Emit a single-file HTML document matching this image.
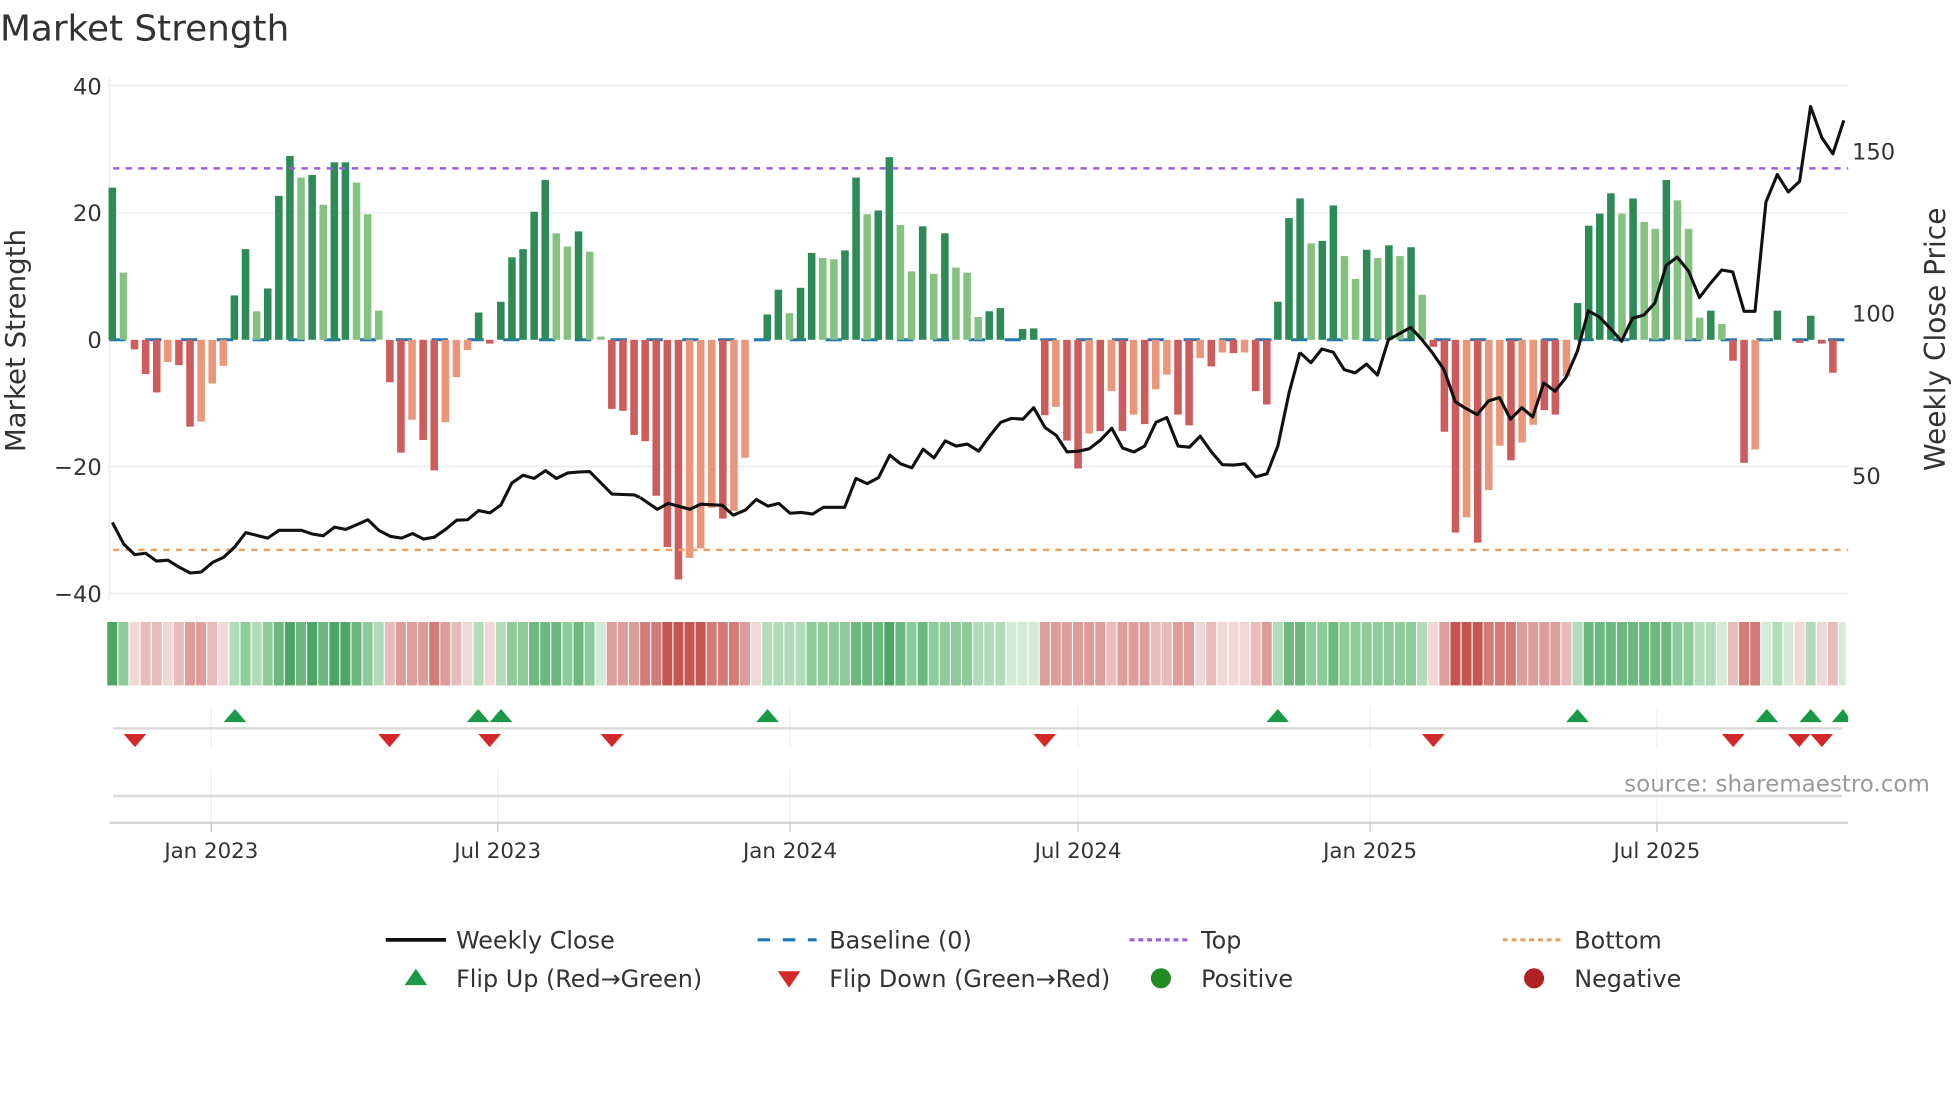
<!DOCTYPE html>
<html><head><meta charset="utf-8"><style>
html,body{margin:0;padding:0;background:#fff;}
svg{display:block;font-family:"DejaVu Sans","Liberation Sans",sans-serif;}
.D{fill:#2e8b57}.L{fill:#85c180}.R{fill:#cd5c5c}.S{fill:#e9967a}
.g5{fill:#4ea566}.g4{fill:#6cb87e}.g3{fill:#8ecb9a}.g2{fill:#b2dcb9}.g1{fill:#d3ebd7}
.r5{fill:#c55550}.r4{fill:#d27b77}.r3{fill:#dd9d9b}.r2{fill:#e8bcbb}.r1{fill:#f1d8d8}
.t{fill:#333}
</style></head><body>
<svg width="1960" height="1102" viewBox="0 0 1560 877" xmlns="http://www.w3.org/2000/svg">
<text x="0" y="32" font-size="28.5" class="t">Market Strength</text>
<g stroke="#ebedf2" stroke-width="1.2">
<line x1="87" y1="68" x2="1471" y2="68"/><line x1="87" y1="169.4" x2="1471" y2="169.4"/>
<line x1="87" y1="371.2" x2="1471" y2="371.2"/><line x1="87" y1="472.1" x2="1471" y2="472.1"/>
<line x1="87" y1="62" x2="87" y2="478"/>
</g>
<g font-size="18" class="t" text-anchor="end">
<text x="81" y="75">40</text><text x="81" y="176">20</text><text x="81" y="277">0</text>
<text x="81" y="378">−20</text><text x="81" y="479">−40</text>
</g>
<g font-size="18" class="t">
<text x="1474" y="127">150</text><text x="1474" y="256">100</text><text x="1474" y="385">50</text>
</g>
<text transform="translate(20,271) rotate(-90)" font-size="22" class="t" text-anchor="middle">Market Strength</text>
<text transform="translate(1548,270) rotate(-90)" font-size="22.3" class="t" text-anchor="middle">Weekly Close Price</text>
<line x1="87" y1="270.4" x2="1471" y2="270.4" stroke="#1f77b4" stroke-width="2.4" stroke-dasharray="13 15.5"/>
<g transform="translate(86.4,270.4) scale(8.835,-5.046)">
<rect x="0" y="0" width=".68" height="24" class="D"/>
<rect x="1" y="0" width=".68" height="10.6" class="L"/>
<rect x="2" y="-1.5" width=".68" height="1.5" class="R"/>
<rect x="3" y="-5.4" width=".68" height="5.4" class="R"/>
<rect x="4" y="-8.3" width=".68" height="8.3" class="R"/>
<rect x="5" y="-3.5" width=".68" height="3.5" class="S"/>
<rect x="6" y="-4" width=".68" height="4" class="R"/>
<rect x="7" y="-13.7" width=".68" height="13.7" class="R"/>
<rect x="8" y="-12.9" width=".68" height="12.9" class="S"/>
<rect x="9" y="-6.9" width=".68" height="6.9" class="S"/>
<rect x="10" y="-4.1" width=".68" height="4.1" class="S"/>
<rect x="11" y="0" width=".68" height="7" class="D"/>
<rect x="12" y="0" width=".68" height="14.3" class="D"/>
<rect x="13" y="0" width=".68" height="4.5" class="L"/>
<rect x="14" y="0" width=".68" height="8.1" class="D"/>
<rect x="15" y="0" width=".68" height="22.7" class="D"/>
<rect x="16" y="0" width=".68" height="29" class="D"/>
<rect x="17" y="0" width=".68" height="25.6" class="L"/>
<rect x="18" y="0" width=".68" height="26" class="D"/>
<rect x="19" y="0" width=".68" height="21.3" class="L"/>
<rect x="20" y="0" width=".68" height="28" class="D"/>
<rect x="21" y="0" width=".68" height="28" class="D"/>
<rect x="22" y="0" width=".68" height="24.8" class="L"/>
<rect x="23" y="0" width=".68" height="19.8" class="L"/>
<rect x="24" y="0" width=".68" height="4.6" class="L"/>
<rect x="25" y="-6.7" width=".68" height="6.7" class="R"/>
<rect x="26" y="-17.8" width=".68" height="17.8" class="R"/>
<rect x="27" y="-12.6" width=".68" height="12.6" class="S"/>
<rect x="28" y="-15.8" width=".68" height="15.8" class="R"/>
<rect x="29" y="-20.6" width=".68" height="20.6" class="R"/>
<rect x="30" y="-13" width=".68" height="13" class="S"/>
<rect x="31" y="-5.9" width=".68" height="5.9" class="S"/>
<rect x="32" y="-1.6" width=".68" height="1.6" class="S"/>
<rect x="33" y="0" width=".68" height="4.3" class="D"/>
<rect x="34" y="-0.6" width=".68" height="0.6" class="R"/>
<rect x="35" y="0" width=".68" height="6" class="D"/>
<rect x="36" y="0" width=".68" height="13" class="D"/>
<rect x="37" y="0" width=".68" height="14.3" class="D"/>
<rect x="38" y="0" width=".68" height="20.2" class="D"/>
<rect x="39" y="0" width=".68" height="25.2" class="D"/>
<rect x="40" y="0" width=".68" height="16.8" class="L"/>
<rect x="41" y="0" width=".68" height="14.7" class="L"/>
<rect x="42" y="0" width=".68" height="17.1" class="D"/>
<rect x="43" y="0" width=".68" height="13.9" class="L"/>
<rect x="44" y="0" width=".68" height="0.5" class="L"/>
<rect x="45" y="-10.9" width=".68" height="10.9" class="R"/>
<rect x="46" y="-11.2" width=".68" height="11.2" class="R"/>
<rect x="47" y="-15" width=".68" height="15" class="R"/>
<rect x="48" y="-16" width=".68" height="16" class="R"/>
<rect x="49" y="-24.6" width=".68" height="24.6" class="R"/>
<rect x="50" y="-32.7" width=".68" height="32.7" class="R"/>
<rect x="51" y="-37.8" width=".68" height="37.8" class="R"/>
<rect x="52" y="-34.4" width=".68" height="34.4" class="S"/>
<rect x="53" y="-32.9" width=".68" height="32.9" class="S"/>
<rect x="54" y="-26.5" width=".68" height="26.5" class="S"/>
<rect x="55" y="-28.2" width=".68" height="28.2" class="R"/>
<rect x="56" y="-27" width=".68" height="27" class="S"/>
<rect x="57" y="-18.6" width=".68" height="18.6" class="S"/>
<rect x="59" y="0" width=".68" height="4" class="D"/>
<rect x="60" y="0" width=".68" height="7.9" class="D"/>
<rect x="61" y="0" width=".68" height="4.2" class="L"/>
<rect x="62" y="0" width=".68" height="8.2" class="D"/>
<rect x="63" y="0" width=".68" height="13.7" class="D"/>
<rect x="64" y="0" width=".68" height="12.9" class="L"/>
<rect x="65" y="0" width=".68" height="12.7" class="L"/>
<rect x="66" y="0" width=".68" height="14.1" class="D"/>
<rect x="67" y="0" width=".68" height="25.6" class="D"/>
<rect x="68" y="0" width=".68" height="19.8" class="L"/>
<rect x="69" y="0" width=".68" height="20.4" class="D"/>
<rect x="70" y="0" width=".68" height="28.8" class="D"/>
<rect x="71" y="0" width=".68" height="18.1" class="L"/>
<rect x="72" y="0" width=".68" height="10.8" class="L"/>
<rect x="73" y="0" width=".68" height="17.9" class="D"/>
<rect x="74" y="0" width=".68" height="10.4" class="L"/>
<rect x="75" y="0" width=".68" height="16.8" class="D"/>
<rect x="76" y="0" width=".68" height="11.4" class="L"/>
<rect x="77" y="0" width=".68" height="10.6" class="L"/>
<rect x="78" y="0" width=".68" height="3.6" class="L"/>
<rect x="79" y="0" width=".68" height="4.5" class="D"/>
<rect x="80" y="0" width=".68" height="5" class="D"/>
<rect x="82" y="0" width=".68" height="1.7" class="D"/>
<rect x="83" y="0" width=".68" height="1.8" class="D"/>
<rect x="84" y="-11.9" width=".68" height="11.9" class="R"/>
<rect x="85" y="-10.6" width=".68" height="10.6" class="S"/>
<rect x="86" y="-15.9" width=".68" height="15.9" class="R"/>
<rect x="87" y="-20.3" width=".68" height="20.3" class="R"/>
<rect x="88" y="-14.8" width=".68" height="14.8" class="S"/>
<rect x="89" y="-14.4" width=".68" height="14.4" class="R"/>
<rect x="90" y="-8.1" width=".68" height="8.1" class="S"/>
<rect x="91" y="-14.4" width=".68" height="14.4" class="R"/>
<rect x="92" y="-11.8" width=".68" height="11.8" class="S"/>
<rect x="93" y="-13.3" width=".68" height="13.3" class="R"/>
<rect x="94" y="-7.8" width=".68" height="7.8" class="S"/>
<rect x="95" y="-5.5" width=".68" height="5.5" class="S"/>
<rect x="96" y="-11.8" width=".68" height="11.8" class="R"/>
<rect x="97" y="-13.5" width=".68" height="13.5" class="R"/>
<rect x="98" y="-2.9" width=".68" height="2.9" class="S"/>
<rect x="99" y="-4.2" width=".68" height="4.2" class="R"/>
<rect x="100" y="-2" width=".68" height="2" class="S"/>
<rect x="101" y="-2.1" width=".68" height="2.1" class="R"/>
<rect x="102" y="-2" width=".68" height="2" class="S"/>
<rect x="103" y="-8.1" width=".68" height="8.1" class="R"/>
<rect x="104" y="-10.2" width=".68" height="10.2" class="R"/>
<rect x="105" y="0" width=".68" height="6" class="D"/>
<rect x="106" y="0" width=".68" height="19.2" class="D"/>
<rect x="107" y="0" width=".68" height="22.3" class="D"/>
<rect x="108" y="0" width=".68" height="15.2" class="L"/>
<rect x="109" y="0" width=".68" height="15.6" class="D"/>
<rect x="110" y="0" width=".68" height="21.2" class="D"/>
<rect x="111" y="0" width=".68" height="13.2" class="L"/>
<rect x="112" y="0" width=".68" height="9.6" class="L"/>
<rect x="113" y="0" width=".68" height="14.2" class="D"/>
<rect x="114" y="0" width=".68" height="12.9" class="L"/>
<rect x="115" y="0" width=".68" height="14.9" class="D"/>
<rect x="116" y="0" width=".68" height="13.2" class="L"/>
<rect x="117" y="0" width=".68" height="14.6" class="D"/>
<rect x="118" y="0" width=".68" height="7.1" class="L"/>
<rect x="119" y="-1.1" width=".68" height="1.1" class="R"/>
<rect x="120" y="-14.5" width=".68" height="14.5" class="R"/>
<rect x="121" y="-30.4" width=".68" height="30.4" class="R"/>
<rect x="122" y="-28" width=".68" height="28" class="S"/>
<rect x="123" y="-32" width=".68" height="32" class="R"/>
<rect x="124" y="-23.7" width=".68" height="23.7" class="S"/>
<rect x="125" y="-16.7" width=".68" height="16.7" class="S"/>
<rect x="126" y="-19" width=".68" height="19" class="R"/>
<rect x="127" y="-16.2" width=".68" height="16.2" class="S"/>
<rect x="128" y="-13.4" width=".68" height="13.4" class="S"/>
<rect x="129" y="-11.1" width=".68" height="11.1" class="R"/>
<rect x="130" y="-11.8" width=".68" height="11.8" class="R"/>
<rect x="131" y="-5.8" width=".68" height="5.8" class="S"/>
<rect x="132" y="0" width=".68" height="5.8" class="D"/>
<rect x="133" y="0" width=".68" height="18" class="D"/>
<rect x="134" y="0" width=".68" height="19.9" class="D"/>
<rect x="135" y="0" width=".68" height="23.1" class="D"/>
<rect x="136" y="0" width=".68" height="19.9" class="L"/>
<rect x="137" y="0" width=".68" height="22.3" class="D"/>
<rect x="138" y="0" width=".68" height="18.6" class="L"/>
<rect x="139" y="0" width=".68" height="17.5" class="L"/>
<rect x="140" y="0" width=".68" height="25.2" class="D"/>
<rect x="141" y="0" width=".68" height="22" class="L"/>
<rect x="142" y="0" width=".68" height="17.5" class="L"/>
<rect x="143" y="0" width=".68" height="3.5" class="L"/>
<rect x="144" y="0" width=".68" height="4.6" class="D"/>
<rect x="145" y="0" width=".68" height="2.5" class="L"/>
<rect x="146" y="-3.3" width=".68" height="3.3" class="R"/>
<rect x="147" y="-19.4" width=".68" height="19.4" class="R"/>
<rect x="148" y="-17.3" width=".68" height="17.3" class="S"/>
<rect x="149" y="0" width=".68" height="0.25" class="L"/>
<rect x="150" y="0" width=".68" height="4.6" class="D"/>
<rect x="152" y="-0.5" width=".68" height="0.5" class="R"/>
<rect x="153" y="0" width=".68" height="3.8" class="D"/>
<rect x="154" y="-0.6" width=".68" height="0.6" class="R"/>
<rect x="155" y="-5.2" width=".68" height="5.2" class="R"/>
</g>
<line x1="90" y1="134" x2="1471" y2="134" stroke="#9b5fd6" stroke-width="2" stroke-dasharray="5 5"/>
<line x1="90" y1="437.6" x2="1471" y2="437.6" stroke="#eba262" stroke-width="2" stroke-dasharray="5 5"/>
<g fill="none" stroke="#111" stroke-width="3.1" stroke-linejoin="round">
<polyline vector-effect="non-scaling-stroke" transform="scale(0.335,0.3654)" points="267,1138 294,1185 320,1208 346,1205 372,1222 399,1220 425,1235 452,1248 478,1246 505,1225 531,1214 557,1192 584,1160 610,1166 636,1172 663,1155 689,1155 716,1155 742,1163 768,1167 795,1148 821,1153 847,1143 874,1132 900,1155 927,1168 954,1172 980,1162 1006,1174 1032,1170 1060,1152 1085,1133 1111,1132 1137,1112 1164,1117 1190,1100 1216,1052 1243,1035 1269,1042 1296,1025 1322,1042 1349,1030 1375,1028 1401,1027 1428,1052 1454,1076 1481,1077 1507,1078 1520,1083"/>
<polyline vector-effect="non-scaling-stroke" transform="translate(509.4,79.6) scale(0.3451,0.3147)" points="0,1005 40,1035 65,1020 115,1035 140,1022 190,1025 215,1050 243,1037 268,1010 295,1027 320,1020 346,1045 372,1043 398,1047 423,1030 472,1030 498,957 524,970 550,955 576,898 601,920 627,930 653,883 678,905 704,862 729,875 755,870 781,888 806,850 832,815 857,805 883,807 908,778 934,828 960,848 985,890 1011,888 1036,882 1062,860 1088,830 1113,880 1139,890 1164,875 1190,815 1215,803 1241,875 1267,878 1292,850 1318,890 1343,922 1369,923 1395,920 1420,953 1446,945 1471,875 1497,740 1522,638"/>
<polyline vector-effect="non-scaling-stroke" transform="translate(1034.7,0) scale(0.335,0.3654)" points="0,768 26,790 52,760 79,767 105,805 131,812 158,793 184,817 210,740 263,713 290,740 316,770 342,805 369,875 395,890 421,903 448,873 474,866 500,913 527,888 553,908 579,834 606,852 632,822 659,765 685,677 711,690 738,716 764,743 790,693 817,686 843,660 870,578 896,560 923,590 949,648 975,617 1002,588 1028,592 1055,678 1081,678 1107,440 1134,380 1160,418 1187,395 1213,232 1240,300 1266,335 1292,262"/>
</g>
<g transform="translate(85.4,495) scale(8.835,50.5)">
<rect x="0" width=".9" height="1" class="g5"/><rect x="1" width=".9" height="1" class="g3"/><rect x="2" width=".9" height="1" class="r1"/><rect x="3" width=".9" height="1" class="r2"/><rect x="4" width=".9" height="1" class="r2"/><rect x="5" width=".9" height="1" class="r1"/><rect x="6" width=".9" height="1" class="r2"/><rect x="7" width=".9" height="1" class="r3"/><rect x="8" width=".9" height="1" class="r3"/><rect x="9" width=".9" height="1" class="r2"/><rect x="10" width=".9" height="1" class="r1"/>
<rect x="11" width=".9" height="1" class="g2"/><rect x="12" width=".9" height="1" class="g3"/><rect x="13" width=".9" height="1" class="g2"/><rect x="14" width=".9" height="1" class="g3"/><rect x="15" width=".9" height="1" class="g4"/><rect x="16" width=".9" height="1" class="g5"/><rect x="17" width=".9" height="1" class="g4"/><rect x="18" width=".9" height="1" class="g5"/><rect x="19" width=".9" height="1" class="g4"/><rect x="20" width=".9" height="1" class="g5"/><rect x="21" width=".9" height="1" class="g5"/><rect x="22" width=".9" height="1" class="g4"/><rect x="23" width=".9" height="1" class="g3"/><rect x="24" width=".9" height="1" class="g2"/>
<rect x="25" width=".9" height="1" class="r2"/><rect x="26" width=".9" height="1" class="r3"/><rect x="27" width=".9" height="1" class="r3"/><rect x="28" width=".9" height="1" class="r3"/><rect x="29" width=".9" height="1" class="r4"/><rect x="30" width=".9" height="1" class="r3"/><rect x="31" width=".9" height="1" class="r2"/><rect x="32" width=".9" height="1" class="r1"/>
<rect x="33" width=".9" height="1" class="g2"/><rect x="34" width=".9" height="1" class="r1"/><rect x="35" width=".9" height="1" class="g2"/><rect x="36" width=".9" height="1" class="g3"/><rect x="37" width=".9" height="1" class="g3"/><rect x="38" width=".9" height="1" class="g4"/><rect x="39" width=".9" height="1" class="g4"/><rect x="40" width=".9" height="1" class="g4"/><rect x="41" width=".9" height="1" class="g3"/><rect x="42" width=".9" height="1" class="g4"/><rect x="43" width=".9" height="1" class="g3"/><rect x="44" width=".9" height="1" class="g1"/>
<rect x="45" width=".9" height="1" class="r3"/><rect x="46" width=".9" height="1" class="r3"/><rect x="47" width=".9" height="1" class="r3"/><rect x="48" width=".9" height="1" class="r4"/><rect x="49" width=".9" height="1" class="r4"/><rect x="50" width=".9" height="1" class="r5"/><rect x="51" width=".9" height="1" class="r5"/><rect x="52" width=".9" height="1" class="r5"/><rect x="53" width=".9" height="1" class="r5"/><rect x="54" width=".9" height="1" class="r4"/><rect x="55" width=".9" height="1" class="r4"/><rect x="56" width=".9" height="1" class="r4"/><rect x="57" width=".9" height="1" class="r3"/><rect x="58" width=".9" height="1" class="r1"/>
<rect x="59" width=".9" height="1" class="g2"/><rect x="60" width=".9" height="1" class="g2"/><rect x="61" width=".9" height="1" class="g2"/><rect x="62" width=".9" height="1" class="g2"/><rect x="63" width=".9" height="1" class="g3"/><rect x="64" width=".9" height="1" class="g3"/><rect x="65" width=".9" height="1" class="g3"/><rect x="66" width=".9" height="1" class="g3"/><rect x="67" width=".9" height="1" class="g4"/><rect x="68" width=".9" height="1" class="g4"/><rect x="69" width=".9" height="1" class="g4"/><rect x="70" width=".9" height="1" class="g5"/><rect x="71" width=".9" height="1" class="g4"/><rect x="72" width=".9" height="1" class="g3"/><rect x="73" width=".9" height="1" class="g4"/><rect x="74" width=".9" height="1" class="g3"/><rect x="75" width=".9" height="1" class="g3"/><rect x="76" width=".9" height="1" class="g3"/><rect x="77" width=".9" height="1" class="g3"/><rect x="78" width=".9" height="1" class="g2"/><rect x="79" width=".9" height="1" class="g2"/><rect x="80" width=".9" height="1" class="g2"/><rect x="81" width=".9" height="1" class="g1"/><rect x="82" width=".9" height="1" class="g1"/><rect x="83" width=".9" height="1" class="g1"/>
<rect x="84" width=".9" height="1" class="r3"/><rect x="85" width=".9" height="1" class="r3"/><rect x="86" width=".9" height="1" class="r3"/><rect x="87" width=".9" height="1" class="r3"/><rect x="88" width=".9" height="1" class="r3"/><rect x="89" width=".9" height="1" class="r3"/><rect x="90" width=".9" height="1" class="r2"/><rect x="91" width=".9" height="1" class="r3"/><rect x="92" width=".9" height="1" class="r3"/><rect x="93" width=".9" height="1" class="r3"/><rect x="94" width=".9" height="1" class="r2"/><rect x="95" width=".9" height="1" class="r2"/><rect x="96" width=".9" height="1" class="r3"/><rect x="97" width=".9" height="1" class="r3"/><rect x="98" width=".9" height="1" class="r1"/><rect x="99" width=".9" height="1" class="r2"/><rect x="100" width=".9" height="1" class="r1"/><rect x="101" width=".9" height="1" class="r1"/><rect x="102" width=".9" height="1" class="r1"/><rect x="103" width=".9" height="1" class="r2"/><rect x="104" width=".9" height="1" class="r3"/>
<rect x="105" width=".9" height="1" class="g2"/><rect x="106" width=".9" height="1" class="g4"/><rect x="107" width=".9" height="1" class="g4"/><rect x="108" width=".9" height="1" class="g3"/><rect x="109" width=".9" height="1" class="g3"/><rect x="110" width=".9" height="1" class="g4"/><rect x="111" width=".9" height="1" class="g3"/><rect x="112" width=".9" height="1" class="g3"/><rect x="113" width=".9" height="1" class="g3"/><rect x="114" width=".9" height="1" class="g3"/><rect x="115" width=".9" height="1" class="g3"/><rect x="116" width=".9" height="1" class="g3"/><rect x="117" width=".9" height="1" class="g3"/><rect x="118" width=".9" height="1" class="g2"/>
<rect x="119" width=".9" height="1" class="r1"/><rect x="120" width=".9" height="1" class="r3"/><rect x="121" width=".9" height="1" class="r5"/><rect x="122" width=".9" height="1" class="r5"/><rect x="123" width=".9" height="1" class="r5"/><rect x="124" width=".9" height="1" class="r4"/><rect x="125" width=".9" height="1" class="r4"/><rect x="126" width=".9" height="1" class="r4"/><rect x="127" width=".9" height="1" class="r3"/><rect x="128" width=".9" height="1" class="r3"/><rect x="129" width=".9" height="1" class="r3"/><rect x="130" width=".9" height="1" class="r3"/><rect x="131" width=".9" height="1" class="r2"/>
<rect x="132" width=".9" height="1" class="g2"/><rect x="133" width=".9" height="1" class="g4"/><rect x="134" width=".9" height="1" class="g4"/><rect x="135" width=".9" height="1" class="g4"/><rect x="136" width=".9" height="1" class="g4"/><rect x="137" width=".9" height="1" class="g4"/><rect x="138" width=".9" height="1" class="g4"/><rect x="139" width=".9" height="1" class="g4"/><rect x="140" width=".9" height="1" class="g4"/><rect x="141" width=".9" height="1" class="g3"/><rect x="142" width=".9" height="1" class="g3"/><rect x="143" width=".9" height="1" class="g2"/><rect x="144" width=".9" height="1" class="g2"/><rect x="145" width=".9" height="1" class="g1"/>
<rect x="146" width=".9" height="1" class="r2"/><rect x="147" width=".9" height="1" class="r4"/><rect x="148" width=".9" height="1" class="r4"/><rect x="149" width=".9" height="1" class="g1"/><rect x="150" width=".9" height="1" class="g2"/><rect x="151" width=".9" height="1" class="g1"/><rect x="152" width=".9" height="1" class="r1"/><rect x="153" width=".9" height="1" class="g2"/><rect x="154" width=".9" height="1" class="r1"/><rect x="155" width=".9" height="1" class="r2"/><rect x="156" width=".6" height="1" class="g1"/>
</g>
<g stroke="#eef0f3" stroke-width="1">
<line x1="168.2" y1="562" x2="168.2" y2="595"/><line x1="396.1" y1="562" x2="396.1" y2="595"/><line x1="628.8" y1="562" x2="628.8" y2="595"/><line x1="858" y1="562" x2="858" y2="595"/><line x1="1090.5" y1="562" x2="1090.5" y2="595"/><line x1="1318.8" y1="562" x2="1318.8" y2="595"/>
<line x1="168.2" y1="612" x2="168.2" y2="655"/><line x1="396.1" y1="612" x2="396.1" y2="655"/><line x1="628.8" y1="612" x2="628.8" y2="655"/><line x1="858" y1="612" x2="858" y2="655"/><line x1="1090.5" y1="612" x2="1090.5" y2="655"/><line x1="1318.8" y1="612" x2="1318.8" y2="655"/>
</g>
<line x1="90" y1="579.7" x2="1466" y2="579.7" stroke="#d9d9d9" stroke-width="2"/>
<line x1="90" y1="633.5" x2="1466" y2="633.5" stroke="#d9d9d9" stroke-width="2"/>
<line x1="87" y1="654.8" x2="1471" y2="654.8" stroke="#d9d9d9" stroke-width="2"/>
<g stroke="#c0c0c0" stroke-width="1"><line x1="168.2" y1="655" x2="168.2" y2="662"/><line x1="396.1" y1="655" x2="396.1" y2="662"/><line x1="628.8" y1="655" x2="628.8" y2="662"/><line x1="858" y1="655" x2="858" y2="662"/><line x1="1090.5" y1="655" x2="1090.5" y2="662"/><line x1="1318.8" y1="655" x2="1318.8" y2="662"/></g>
<g fill="#1a9a48">
<path d="M178 574.7h18l-9-10.4z"/><path d="M371.6 574.7h18l-9-10.4z"/><path d="M389.8 574.7h18l-9-10.4z"/><path d="M601.9 574.7h18l-9-10.4z"/><path d="M1008 574.7h18l-9-10.4z"/><path d="M1246.5 574.7h18l-9-10.4z"/><path d="M1397.2 574.7h18l-9-10.4z"/><path d="M1432.2 574.7h18l-9-10.4z"/><path d="M1458 574.7h13v-4.5l-4-5.9z"/>
</g>
<g fill="#d62728">
<path d="M98.4 584.2h18l-9 10.4z"/><path d="M301 584.2h18l-9 10.4z"/><path d="M380.7 584.2h18l-9 10.4z"/><path d="M478 584.2h18l-9 10.4z"/><path d="M822.5 584.2h18l-9 10.4z"/><path d="M1131.8 584.2h18l-9 10.4z"/><path d="M1370.5 584.2h18l-9 10.4z"/><path d="M1423 584.2h18l-9 10.4z"/><path d="M1441 584.2h18l-9 10.4z"/>
</g>
<text x="1536" y="630" font-size="18.3" fill="#9a9a9a" text-anchor="end">source: sharemaestro.com</text>
<g font-size="17" class="t" text-anchor="middle">
<text x="168.2" y="683">Jan 2023</text><text x="396.1" y="683">Jul 2023</text><text x="628.8" y="683">Jan 2024</text><text x="858" y="683">Jul 2024</text><text x="1090.5" y="683">Jan 2025</text><text x="1318.8" y="683">Jul 2025</text>
</g>
<line x1="307" y1="748" x2="355" y2="748" stroke="#111" stroke-width="3"/>
<line x1="603" y1="748" x2="650" y2="748" stroke="#1f77b4" stroke-width="2.5" stroke-dasharray="10 10"/>
<line x1="899" y1="748" x2="945" y2="748" stroke="#9b5fd6" stroke-width="2.5" stroke-dasharray="4 3"/>
<line x1="1196" y1="748" x2="1242" y2="748" stroke="#eba262" stroke-width="2.5" stroke-dasharray="4 3"/>
<path d="M322 784h18l-9-13z" fill="#1a9a48"/>
<path d="M619 773h18l-9 13z" fill="#d62728"/>
<circle cx="924" cy="778.6" r="8" fill="#228b22"/>
<circle cx="1221" cy="778.6" r="8" fill="#b22222"/>
<g font-size="19" class="t">
<text x="363" y="755">Weekly Close</text><text x="660" y="755">Baseline (0)</text><text x="956" y="755">Top</text><text x="1253" y="755">Bottom</text>
<text x="363" y="785.5">Flip Up (Red→Green)</text><text x="660" y="785.5">Flip Down (Green→Red)</text><text x="956" y="785.5">Positive</text><text x="1253" y="785.5">Negative</text>
</g>
</svg>
</body></html>
